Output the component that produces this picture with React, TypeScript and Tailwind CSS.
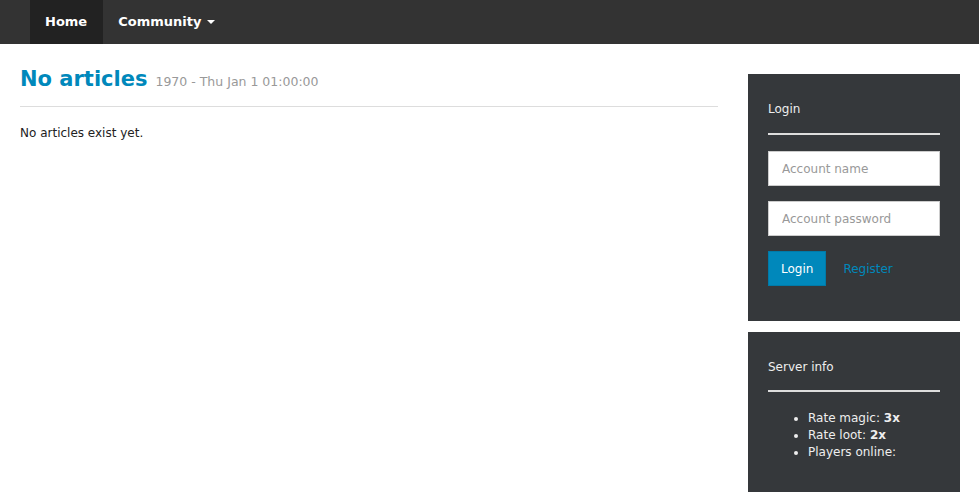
export default function App() {
  return (
    <div className="min-h-screen bg-white text-[#222] text-[12px]" style={{ fontFamily: '"DejaVu Sans", Verdana, sans-serif' }}>
      <nav className="h-[44px] bg-[#333333] flex pl-[30px]">
        <a className="h-full flex items-center pl-[15px] pr-[16px] bg-[#222222] text-white font-bold text-[13px]">Home</a>
        <a className="h-full flex items-center px-[15px] text-white font-bold text-[13px] gap-[6px]">
          Community
          <span className="inline-block w-0 h-0 border-l-[4px] border-r-[4px] border-t-[4px] border-l-transparent border-r-transparent border-t-white" />
        </a>
      </nav>

      <div className="flex pl-[20px] pr-[19px] gap-[30px]">
        <main className="flex-1 pt-[20px]">
          <div className="flex items-baseline gap-[8px] pb-[12px] border-b border-[#dddddd]">
            <h1 className="text-[21px] font-bold text-[#0088bb] leading-[30px]">No articles</h1>
            <span className="text-[12.5px] text-[#999999]">1970 - Thu Jan 1 01:00:00</span>
          </div>
          <p className="mt-[17px]">No articles exist yet.</p>
        </main>

        <aside className="w-[212px] pt-[30px] flex flex-col gap-[11px]">
          <div className="bg-[#35383b] px-[20px] pt-[26px] pb-[35px] text-[#eeeeee]">
            <h3 className="text-[12px] pb-[15px] border-b-2 border-[#dddddd]">Login</h3>
            <input
              placeholder="Account name"
              className="mt-[16px] w-full h-[35px] bg-white border border-[#cccccc] px-[13px] text-[12px] placeholder:text-[#999999] outline-none"
            />
            <input
              type="password"
              placeholder="Account password"
              className="mt-[15px] w-full h-[35px] bg-white border border-[#cccccc] px-[13px] text-[12px] placeholder:text-[#999999] outline-none"
            />
            <div className="mt-[15px] flex items-center gap-[17px]">
              <button className="h-[35px] px-[12px] bg-[#0088bb] border border-[#007aa8] text-white text-[12px]">Login</button>
              <a className="text-[#0088bb] text-[12px]">Register</a>
            </div>
          </div>

          <div className="bg-[#35383b] px-[20px] pt-[26px] pb-[40px] text-[#eeeeee]">
            <h3 className="text-[12px] pb-[14px] border-b-2 border-[#dddddd]">Server info</h3>
            <ul className="mt-[18px] list-disc pl-[40px] leading-[17px]">
              <li>Rate magic: <b>3x</b></li>
              <li>Rate loot: <b>2x</b></li>
              <li>Players online: </li>
            </ul>
          </div>
        </aside>
      </div>
    </div>
  );
}
